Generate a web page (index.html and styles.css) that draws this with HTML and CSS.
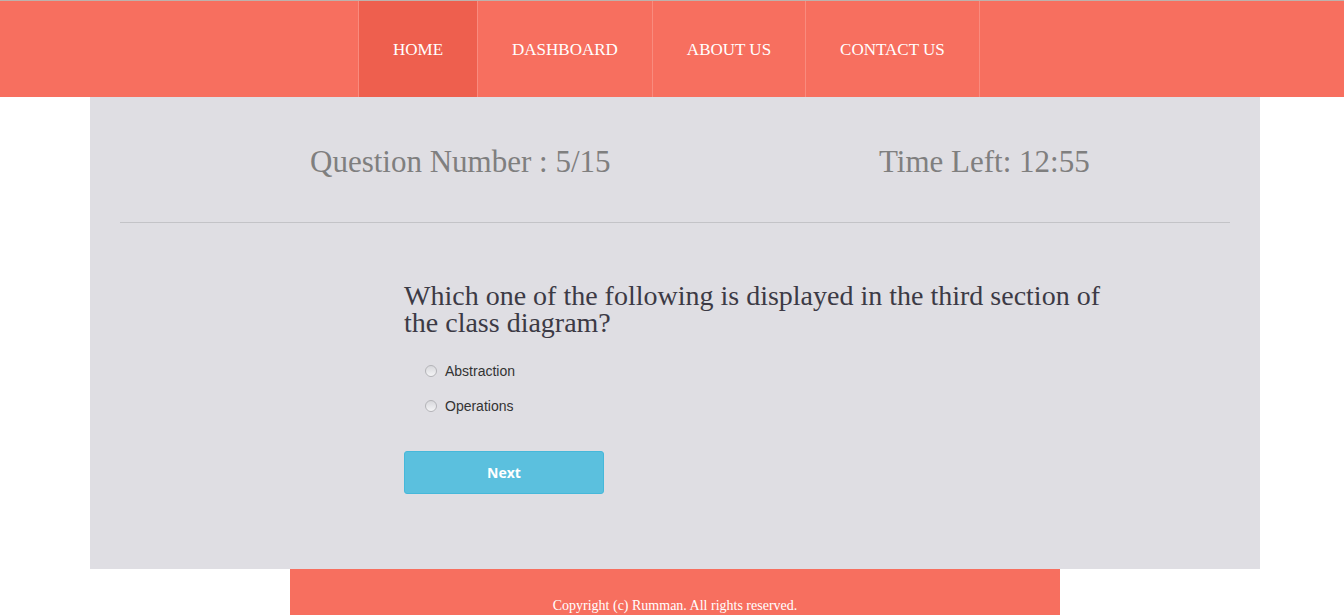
FILE: index.html
```html
<!DOCTYPE html>
<html>
<head>
<meta charset="utf-8">
<link rel="stylesheet" href="styles.css">
</head>
<body>
<header class="topbar">
  <nav class="nav">
    <a class="nav-item active" href="#">HOME</a>
    <a class="nav-item" href="#">DASHBOARD</a>
    <a class="nav-item" href="#">ABOUT US</a>
    <a class="nav-item" href="#">CONTACT US</a>
  </nav>
</header>
<main class="panel">
  <div class="status">
    <div class="status-col">Question Number : 5/15</div>
    <div class="status-col">Time Left: 12:55</div>
  </div>
  <hr class="divider">
  <form class="quiz">
    <h2 class="question">Which one of the following is displayed in the third section of the class diagram?</h2>
    <label class="option"><input type="radio" name="ans"><span>Abstraction</span></label>
    <label class="option"><input type="radio" name="ans"><span>Operations</span></label>
    <button type="button" class="btn-next">Next</button>
  </form>
</main>
<footer class="footer">Copyright (c) Rumman. All rights reserved.</footer>
</body>
</html>
```
FILE: styles.css
```css
html, body {
  margin: 0;
  padding: 0;
}
body {
  background: #ffffff;
  font-family: "Liberation Serif", "Times New Roman", serif;
  border-top: 1px solid #bdb2ad;
  overflow: hidden;
}
.topbar {
  background: #f76f5f;
  height: 96px;
  display: flex;
}
.nav {
  display: flex;
  margin-left: 358px;
  border-left: 1px solid #f98b7e;
}
.nav-item {
  display: flex;
  align-items: center;
  padding: 2px 34px 0 34px;
  color: #ffffff;
  text-decoration: none;
  font-size: 17px;
  border-right: 1px solid #f98b7e;
}
.nav-item.active {
  background: #ee5f4e;
}
.panel {
  width: 1170px;
  margin: 0 0 0 90px;
  background: #dfdee3;
  height: 472px;
  box-sizing: border-box;
  padding: 0 30px;
  display: flex;
  flex-direction: column;
}
.status {
  display: grid;
  grid-template-columns: 569px 1fr;
  padding-left: 190px;
  padding-top: 45px;
  height: 80px;
  box-sizing: border-box;
  color: #7f7f7f;
  font-size: 31px;
  line-height: 40px;
}
.divider {
  margin: 45px 0 0 0;
  border: 0;
  border-top: 1px solid #c3c3c7;
  height: 0;
}
.quiz {
  margin-left: 284px;
  padding-top: 59px;
  display: flex;
  flex-direction: column;
  align-items: flex-start;
}
.question {
  margin: 0;
  width: 720px;
  font-weight: normal;
  font-size: 28px;
  line-height: 27px;
  color: #3c3a45;
}
.option {
  display: flex;
  align-items: center;
  margin-left: 20px;
  height: 35px;
  font-family: "Liberation Sans", Arial, sans-serif;
  font-size: 14px;
  color: #333333;
}
.option:first-of-type {
  margin-top: 17px;
}
.option input {
  appearance: none;
  -webkit-appearance: none;
  box-sizing: border-box;
  margin: 0 8px 0 1px;
  width: 12px;
  height: 12px;
  border-radius: 50%;
  border: 1px solid #b4b4b8;
  background: linear-gradient(#d8d8dc, #f4f4f6);
}
.btn-next {
  margin-top: 28px;
  width: 200px;
  height: 43px;
  background: #5bc0de;
  border: 1px solid #46b8da;
  border-radius: 3px;
  color: #ffffff;
  font-family: "Open Sans", "Liberation Sans", Arial, sans-serif;
  font-weight: bold;
  font-size: 14px;
}
.footer {
  width: 770px;
  margin: 0 0 0 290px;
  background: #f76f5f;
  height: 60px;
  box-sizing: border-box;
  padding-top: 29px;
  text-align: center;
  color: #ffffff;
  font-size: 14px;
}
```
